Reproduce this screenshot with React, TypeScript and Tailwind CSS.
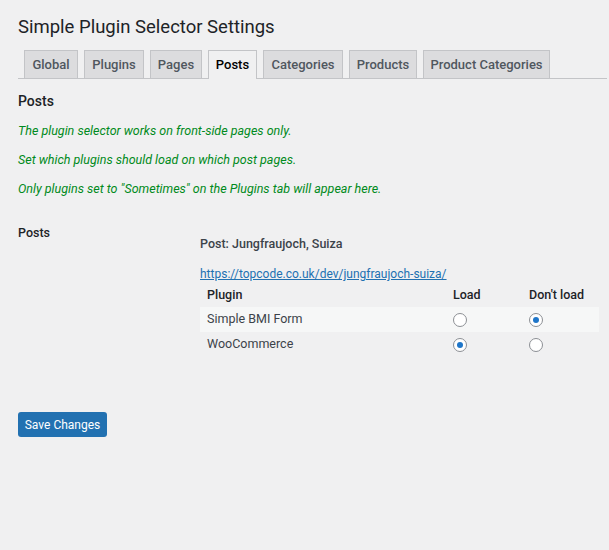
import React from 'react';

const TABS = [
    { label: 'Global', w: 'w-[54px]' },
    { label: 'Plugins', w: 'w-[60px]' },
    { label: 'Pages', w: 'w-[52px]' },
    { label: 'Posts', w: 'w-[49px]', active: true },
    { label: 'Categories', w: 'w-[80px]' },
    { label: 'Products', w: 'w-[68px]' },
    { label: 'Product Categories', w: 'w-[127px]' },
];

const PLUGINS = [
    { name: 'Simple BMI Form', load: false },
    { name: 'WooCommerce', load: true },
];

const Radio: React.FC<{ checked: boolean }> = ({ checked }) => (
    <span className="flex h-[14px] w-[14px] items-center justify-center rounded-full border border-[#8c8f94] bg-white">
        {checked && <span className="h-[6px] w-[6px] rounded-full bg-[#1f76c9]" />}
    </span>
);

const App: React.FC = () => {
    return (
        <div className="min-h-screen bg-[#f0f0f1] font-['Roboto','Liberation_Sans',sans-serif] text-[12.5px] text-[#3c434a]">
            <div className="pl-[18px] pr-[2px] pt-[13px]">
                <h1 className="text-[18.5px] leading-[28px] font-normal text-[#1d2327]">Simple Plugin Selector Settings</h1>

                {/* tabs */}
                <nav className="mt-[9px] flex items-end gap-[6px] border-b border-[#c3c4c7] pl-[6px]">
                    {TABS.map(tab => (
                        <a
                            key={tab.label}
                            className={`${tab.w} flex items-center justify-center whitespace-nowrap border-x border-t border-[#c3c4c7] text-[13px] font-medium ${
                                tab.active
                                    ? 'h-[29px] -mb-px bg-[#f0f0f1] text-[#000]'
                                    : 'h-[28px] bg-[#dcdcde] text-[#50575e]'
                            }`}
                        >
                            {tab.label}
                        </a>
                    ))}
                </nav>

                <h2 className="mt-[12px] text-[14px] leading-[20px] font-medium text-[#1d2327]">Posts</h2>
                <p className="mt-[10px] leading-[20px] italic text-[#008a20]">The plugin selector works on front-side pages only.</p>
                <p className="mt-[9px] leading-[20px] italic text-[#008a20]">Set which plugins should load on which post pages.</p>
                <p className="mt-[9px] leading-[20px] italic text-[#008a20]">Only plugins set to "Sometimes" on the Plugins tab will appear here.</p>

                {/* form row */}
                <div className="mt-[24px] flex">
                    <div className="w-[182px] shrink-0 leading-[20px] font-medium text-[#1d2327]">Posts</div>
                    <div className="mt-[11px] w-[399px]">
                        <div className="leading-[20px] font-medium text-[#3c434a]">Post: Jungfraujoch, Suiza</div>
                        <a className="mt-[10px] block text-[12px] leading-[20px] text-[#2271b1] underline">https://topcode.co.uk/dev/jungfraujoch-suiza/</a>
                        <div className="flex h-[23px] items-center font-medium text-[#1d2327]">
                            <div className="w-[246px] pl-[7px]">Plugin</div>
                            <div className="w-[76px] pl-[7px]">Load</div>
                            <div className="flex-1 pl-[7px]">Don't load</div>
                        </div>
                        {PLUGINS.map((p, i) => (
                            <div key={p.name} className={`flex h-[25px] items-center ${i % 2 === 0 ? 'bg-[#f6f7f7]' : ''}`}>
                                <div className="w-[246px] pl-[7px]">{p.name}</div>
                                <div className="w-[76px] pl-[7px]"><Radio checked={p.load} /></div>
                                <div className="flex-1 pl-[7px]"><Radio checked={!p.load} /></div>
                            </div>
                        ))}
                    </div>
                </div>

                <button className="mt-[55px] h-[25px] w-[89px] rounded-[3px] bg-[#2271b1] text-[12px] text-white">Save Changes</button>
            </div>
        </div>
    );
};

export default App;
